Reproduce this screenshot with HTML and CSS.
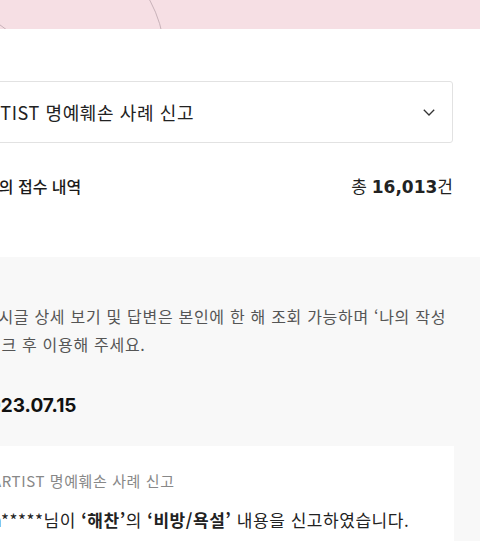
FILE: index.html
```html
<!DOCTYPE html>
<html lang="ko">
<head>
<meta charset="utf-8">
<link rel="stylesheet" href="styles.css">
</head>
<body>
<div class="banner">
  <svg class="banner-art" width="480" height="29" viewBox="0 0 480 29" aria-hidden="true">
    <circle cx="40" cy="60" r="125" fill="none" stroke="#c8b2b9" stroke-width="1"/>
    <circle cx="-62" cy="112" r="107" fill="none" stroke="#c8b2b9" stroke-width="1"/>
  </svg>
</div>

<div class="top">
  <div class="select">
    <span class="select-label">ARTIST 명예훼손 사례 신고</span>
    <svg class="chevron" width="12" height="7" viewBox="0 0 12 7" aria-hidden="true">
      <path d="M0.8 0.8 L6 6 L11.2 0.8" fill="none" stroke="#333" stroke-width="1.3"/>
    </svg>
  </div>
  <div class="summary">
    <h2 class="summary-title">나의 접수 내역</h2>
    <p class="summary-count">총 <strong>16,013</strong>건</p>
  </div>
</div>

<div class="gray">
  <div class="gray-inner">
    <p class="notice">게시글 상세 보기 및 답변은 본인에 한 해 조회 가능하며 ‘나의 작성<br><span class="notice-cont">체크 후 이용해 주세요.</span></p>
    <h3 class="date">2023.07.15</h3>
    <div class="card">
      <p class="card-cat">ARTIST 명예훼손 사례 신고</p>
      <p class="card-text">a*****님이 <b>‘해찬’</b>의 <b>‘비방/욕설’</b> 내용을 신고하였습니다.</p>
    </div>
  </div>
</div>
</body>
</html>
```

FILE: styles.css
```css
html, body {
  margin: 0;
  padding: 0;
  background: #ffffff;
  overflow: hidden;
  font-family: "Noto Sans CJK KR", "Noto Sans", sans-serif;
  color: #222;
}

.banner {
  height: 29px;
  background: #f6dfe4;
  overflow: hidden;
}

.banner-art {
  display: block;
}

.top {
  margin-left: -44px;
  width: 497px;
}

.select {
  margin-top: 52px;
  height: 62px;
  box-sizing: border-box;
  border: 1px solid #e2e2e2;
  border-radius: 3px;
  display: flex;
  align-items: center;
  justify-content: space-between;
  padding: 0 17px 0 20px;
}

.select-label {
  font-size: 18px;
  letter-spacing: 0.6px;
  color: #222;
}

.chevron {
  display: block;
}

.summary {
  margin-top: 31px;
  height: 24px;
  display: flex;
  align-items: center;
  justify-content: space-between;
  padding-left: 28px;
}

.summary-title {
  margin: 0;
  font-size: 16px;
  font-weight: 500;
  line-height: 24px;
  color: #1a1a1a;
}

.summary-count {
  margin: 0;
  font-size: 17px;
  line-height: 24px;
}

.summary-count strong {
  font-family: "DejaVu Sans", sans-serif;
  font-weight: 700;
  font-size: 17px;
}

.gray {
  margin-top: 59px;
  background: #f8f8f8;
  height: 400px;
}

.gray-inner {
  margin-left: -44px;
  width: 498px;
  padding-top: 45px;
}

.notice {
  margin: 0;
  padding-left: 27px;
  font-size: 16px;
  letter-spacing: 0.7px;
  line-height: 28px;
  color: #555;
  white-space: nowrap;
}

.notice-cont {
  margin-left: 3px;
}

.date {
  margin: 34px 0 0;
  padding-left: 20px;
  font-family: "Inter", sans-serif;
  font-size: 19px;
  font-weight: 700;
  line-height: 28px;
  color: #111;
}

.card {
  margin: 26px 0 0 20px;
  background: #ffffff;
  padding: 25px 16px 20px 16px;
}

.card-cat {
  margin: 0;
  font-size: 15px;
  letter-spacing: 0.6px;
  line-height: 20px;
  color: #888;
}

.card-text {
  margin: 16px 0 0;
  font-size: 17px;
  letter-spacing: 0.55px;
  line-height: 26px;
  color: #222;
}

.card-text b {
  font-weight: 700;
}
```
